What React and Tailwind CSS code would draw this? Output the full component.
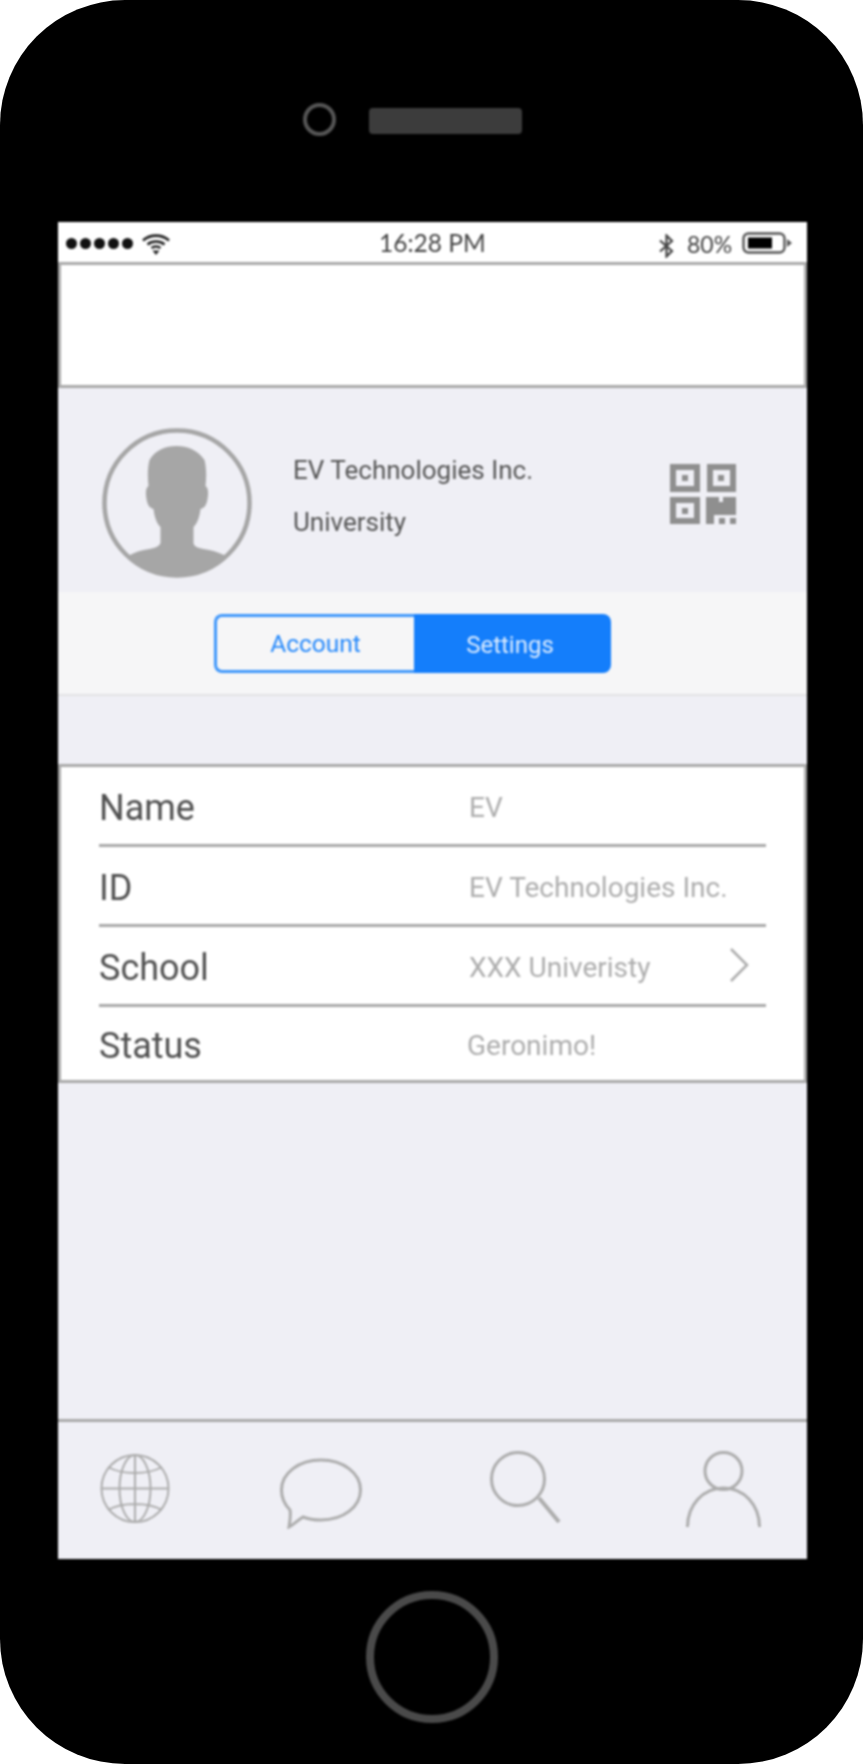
const rows = [
  { label: 'Name', value: 'EV' },
  { label: 'ID', value: 'EV Technologies Inc.' },
  { label: 'School', value: 'XXX Univeristy', arrow: true },
  { label: 'Status', value: 'Geronimo!', shift: '-ml-[2px]' },
];

function Wifi() {
  return (
    <svg width="28" height="22" viewBox="0 0 28 22" fill="none" stroke="#222" strokeWidth="2.6">
      <path d="M1 7.5C8 1 20 1 27 7.5" />
      <path d="M5.5 11.5C10 7.5 18 7.5 22.5 11.5" />
      <path d="M9.5 15C12 13 16 13 18.5 15" />
      <path d="M10.5 17.5h7l-3.5 4.5z" fill="#222" stroke="none" />
    </svg>
  );
}

function Bluetooth() {
  return (
    <svg width="15" height="24" viewBox="0 0 15 24" fill="none" stroke="#444" strokeWidth="2.2">
      <path d="M1 6.5L13 17L7.5 22.5V1.5L13 7L1 17.5" />
    </svg>
  );
}

function Battery() {
  return (
    <svg width="50" height="22" viewBox="0 0 50 22" fill="none">
      <rect x="1.5" y="1.5" width="41" height="19" rx="5" stroke="#555" strokeWidth="2.4" />
      <rect x="6" y="5.5" width="24" height="11" fill="#000" />
      <path d="M45 7l5 4-5 4z" fill="#555" />
    </svg>
  );
}

function Avatar() {
  return (
    <svg width="150" height="150" viewBox="12.5 13 150 150" fill="none">
      <circle cx="87.5" cy="88" r="72.5" stroke="#a6a6a6" strokeWidth="4.5" />
      <path
        fill="#a6a6a6"
        d="M87 31C76 31 66 35 60 45C58 53 58 62 59 71C56 73 56 78 57 84C58 90 60 93 64 94C65 102 67 108 71 112L71 128C70 131 66 133 60 134C52 135 46 137 40.5 140L40 143A72.5 72.5 0 0 0 135 143L134.5 140C128 137 122 135 114 134C108 133 104 131 104 128L104 112C108 108 110 102 111 94C115 93 117 90 118 84C119 78 119 73 116 71C117 62 117 53 115 45C108 35 98 31 87 31Z"
      />
    </svg>
  );
}

function QrCode() {
  return (
    <svg width="66" height="60" viewBox="0 0 66 60" fill="#8f8f8f">
      <g fill="none" stroke="#8f8f8f" strokeWidth="6">
        <rect x="3" y="3" width="24" height="22" />
        <rect x="40" y="3" width="23" height="22" />
        <rect x="3" y="36" width="24" height="21" />
      </g>
      <rect x="12" y="11" width="6" height="6" />
      <rect x="48" y="11" width="6" height="6" />
      <rect x="12" y="44" width="6" height="6" />
      <path d="M36 33h13v5h4v-5h13v18H44v9h-8z" />
      <rect x="49" y="54" width="6" height="6" />
      <rect x="60" y="54" width="6" height="6" />
    </svg>
  );
}

function Globe() {
  return (
    <svg width="70" height="71" viewBox="0 0 70 71" fill="none" stroke="#adadad" strokeWidth="2">
      <circle cx="35" cy="35.5" r="33.5" />
      <ellipse cx="35" cy="35.5" rx="15.5" ry="33.5" />
      <path d="M35 2v67M1.5 35.5h67M8 14c14 8 40 8 54 0M8 57c14-8 40-8 54 0" />
    </svg>
  );
}

function Chat() {
  return (
    <svg width="82" height="71" viewBox="0 0 82 71" fill="none" stroke="#adadad" strokeWidth="3">
      <path d="M10 52C4 46 1.5 40 1.5 32C1.5 15 19 2 41 2s39.5 13 39.5 30S63 62 41 62C33 62 28 61 23 59C18 62 13 67 9 69C10 63 11 57 10 52Z" />
    </svg>
  );
}

function Search() {
  return (
    <svg width="71" height="72" viewBox="0 0 71 72" fill="none" stroke="#adadad" strokeWidth="3">
      <circle cx="28" cy="28" r="26.5" />
      <path d="M49 47L69 71" strokeWidth="4" />
    </svg>
  );
}

function User() {
  return (
    <svg width="75" height="76" viewBox="0 0 75 76" fill="none" stroke="#adadad" strokeWidth="3">
      <circle cx="37.5" cy="20" r="18.5" />
      <path d="M1.5 76C1.5 54 17 37 37.5 37S73.5 54 73.5 76" />
    </svg>
  );
}

function Chevron() {
  return (
    <svg width="20" height="36" viewBox="0 0 20 36" fill="none" stroke="#adadad" strokeWidth="2.5">
      <path d="M2 2L18 18L2 34" />
    </svg>
  );
}

export default function App() {
  return (
    <div className="w-[863px] h-[1764px] bg-white font-['Roboto',sans-serif]">
      <div className="w-full h-full bg-black rounded-[125px] flex flex-col">
        {/* camera and speaker */}
        <div className="h-[222px] pt-[103px] pl-[303px] flex items-start blur-[1px]">
          <div className="w-[33px] h-[33px] rounded-full border-[4px] border-[#555555]" />
          <div className="w-[153px] h-[26px] ml-[33px] mt-[5px] rounded-[4px] bg-[#3c3c3c]" />
        </div>

        {/* screen */}
        <div className="mx-[58px] w-[749px] h-[1337px] bg-[#efeff5] flex flex-col blur-[1px]">
          <div className="h-[40px] shrink-0 bg-white pl-[8px] flex items-center text-[#444444] whitespace-nowrap pt-[3px]">
            <div className="flex gap-[3px] w-[76px] shrink-0">
              {[0, 1, 2, 3, 4].map((n) => (
                <span key={n} className="w-[11px] h-[11px] rounded-full bg-[#111111]" />
              ))}
            </div>
            <div className="w-[237px] shrink-0"><Wifi /></div>
            <span className="w-[280px] shrink-0 text-[24.5px] leading-none font-['Lato',sans-serif]">16:28 PM</span>
            <div className="w-[28px] shrink-0 mt-[4px]"><Bluetooth /></div>
            <span className="w-[55px] shrink-0 mt-[2px] text-[23px] leading-none font-['Lato',sans-serif]">80%</span>
            <div className="-mt-[1px]"><Battery /></div>
          </div>

          <div className="h-[126px] bg-white border-[3px] border-[#a9a9a9]" />

          <div className="h-[204px] flex items-start">
            <div className="ml-[44px] mt-[40px]"><Avatar /></div>
            <div className="ml-[41px] mt-[67px] text-[26px] leading-[30px] text-[#555555] w-[377px]">
              <p>EV Technologies Inc.</p>
              <p className="mt-[22px]">University</p>
            </div>
            <div className="mt-[76px]"><QrCode /></div>
          </div>

          <div className="h-[104px] bg-[#f6f6f7] border-b-2 border-[#e2e2e4] pt-[22px] pl-[156px]">
            <div className="flex w-[397px] h-[59px] text-[24.5px]">
              <div className="w-[200px] pt-[2px] flex items-center justify-center rounded-l-[8px] border-[3px] border-r-0 border-[#3f97fb] text-[#2488fb]">Account</div>
              <div className="flex-1 pt-[2px] pr-[5px] flex items-center justify-center rounded-r-[8px] bg-[#147efb] text-[24px] text-[#dcecff]">Settings</div>
            </div>
          </div>

          <div className="h-[68px]" />

          <div className="h-[319px] bg-white border-[3px] border-[#a9a9a9] px-[38px]">
            {rows.map((row, i) => (
              <div
                key={row.label}
                className={i < 3 ? 'h-[80px] pt-[5px] flex items-center border-b-[3px] border-[#a9a9a9]' : 'h-[73px] pt-[5px] flex items-center'}
              >
                <span className="w-[370px] text-[36px] leading-none text-[#505050]">{row.label}</span>
                <span className={`text-[28px] leading-none text-[#adadad] ${row.shift || ''}`}>{row.value}</span>
                {row.arrow && <div className="ml-auto mr-[17px] -mt-[7px]"><Chevron /></div>}
              </div>
            ))}
          </div>

          <div className="h-[336px]" />

          <div className="flex-1 border-t-[3px] border-[#a9a9a9] flex items-start pl-[42px]">
            <div className="mt-[31px]"><Globe /></div>
            <div className="ml-[110px] mt-[36px]"><Chat /></div>
            <div className="ml-[128px] mt-[29px]"><Search /></div>
            <div className="ml-[125px] mt-[29px]"><User /></div>
          </div>
        </div>

        {/* home button */}
        <div className="flex-1 flex justify-center pt-[32px] pl-[1px] blur-[1px]">
          <div className="w-[132px] h-[132px] rounded-full border-[8px] border-[#4a4a4a]" />
        </div>
      </div>
    </div>
  );
}
